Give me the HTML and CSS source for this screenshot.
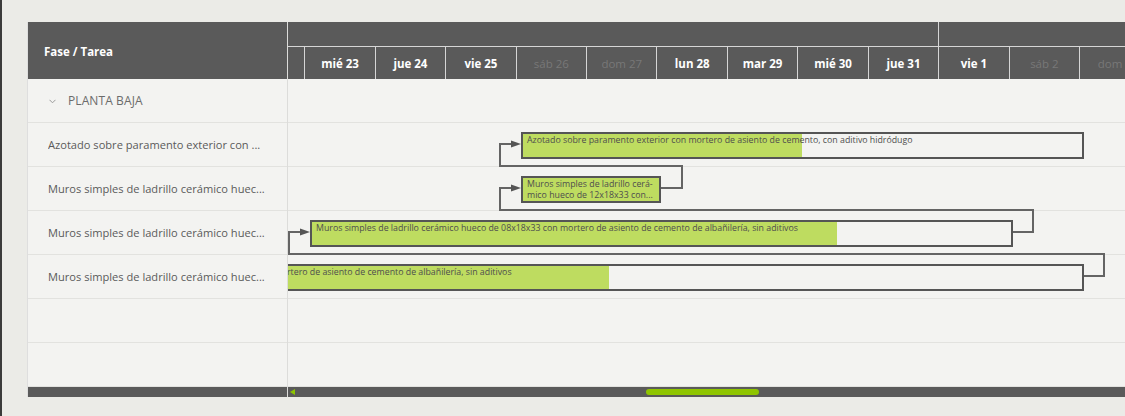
FILE: index.html
```html
<!DOCTYPE html>
<html lang="es">
<head>
<meta charset="utf-8">
<title>Gantt</title>
<link rel="stylesheet" href="styles.css">
</head>
<body>
<div class="app">
  <div class="gantt">
    <div class="left">
      <div class="lhead">Fase / Tarea</div>
      <div class="lrow group">
        <svg class="chev" width="7" height="5" viewBox="0 0 7 5"><polyline points="0.5,0.8 3.5,3.8 6.5,0.8" fill="none" stroke="#9a9a9a" stroke-width="1"/></svg>
        <span class="gname">PLANTA BAJA</span>
      </div>
      <div class="lrow task"><span class="tname">Azotado sobre paramento exterior con ...</span></div>
      <div class="lrow task"><span class="tname">Muros simples de ladrillo cerámico huec...</span></div>
      <div class="lrow task"><span class="tname">Muros simples de ladrillo cerámico huec...</span></div>
      <div class="lrow task"><span class="tname">Muros simples de ladrillo cerámico huec...</span></div>
      <div class="lrow"></div>
      <div class="lrow"></div>
      <div class="lscroll"></div>
    </div>
    <div class="right">
      <div class="thead">
        <div class="months">
          <div class="month" style="width:704.5px"></div>
          <div class="month month-next"></div>
        </div>
        <div class="days">
          <div class="day"></div>
          <div class="day">mié 23</div>
          <div class="day">jue 24</div>
          <div class="day">vie 25</div>
          <div class="day weekend">sáb 26</div>
          <div class="day weekend">dom 27</div>
          <div class="day">lun 28</div>
          <div class="day">mar 29</div>
          <div class="day">mié 30</div>
          <div class="day">jue 31</div>
          <div class="day">vie 1</div>
          <div class="day weekend">sáb 2</div>
          <div class="day weekend">dom 3</div>
        </div>
      </div>
      <div class="tbody">
        <div class="trow"></div>
        <div class="trow">
          <div class="bar" style="left:233px;width:563px">
            <div class="fill" style="width:279px"></div>
            <div class="btext">Azotado sobre paramento exterior con mortero de asiento de cemento, con aditivo hidródugo</div>
          </div>
        </div>
        <div class="trow">
          <div class="bar" style="left:233px;width:140px">
            <div class="fill" style="width:100%"></div>
            <div class="btext">Muros simples de ladrillo cerá-<br>mico hueco de 12x18x33 con...<br>mortero de asiento de cemento</div>
          </div>
        </div>
        <div class="trow">
          <div class="bar" style="left:22px;width:703px">
            <div class="fill" style="width:525px"></div>
            <div class="btext">Muros simples de ladrillo cerámico hueco de 08x18x33 con mortero de asiento de cemento de albañilería, sin aditivos</div>
          </div>
        </div>
        <div class="trow">
          <div class="bar" style="left:-2px;width:798px">
            <div class="fill" style="width:321px"></div>
            <div class="btext clipped">rtero de asiento de cemento de albañilería, sin aditivos</div>
          </div>
        </div>
        <div class="trow"></div>
        <div class="trow"></div>
        <svg class="links" width="840" height="308" viewBox="0 0 840 308">
          <g fill="none" stroke="#646464" stroke-width="2">
            <path d="M373 109 H394 V87 H212 V65 H224"/>
            <path d="M725 153 H745 V131 H212 V109 H224"/>
            <path d="M796 197 H816 V175 H1 V153 H13"/>
          </g>
          <g fill="#555555">
            <polygon points="223,61.5 233,65 223,68.5"/>
            <polygon points="223,105.5 233,109 223,112.5"/>
            <polygon points="12,149.5 22,153 12,156.5"/>
          </g>
        </svg>
      </div>
      <div class="tscroll">
        <span class="sarrow"></span>
        <span class="thumb"></span>
      </div>
    </div>
  </div>
</div>
</body>
</html>
```

FILE: styles.css
```css
html, body {
  margin: 0;
  padding: 0;
  height: 100%;
}
body {
  background: #ebebe7;
  font-family: "Open Sans", "Noto Sans", "DejaVu Sans", sans-serif;
  overflow: hidden;
}
.app {
  height: 100%;
  border-left: 2px solid #3b3b3b;
  box-sizing: border-box;
  padding: 22px 0 0 26px;
  overflow: hidden;
}
.gantt {
  display: flex;
  width: 1140px;
  background: #f3f3f1;
  border-left: 1px solid #dedede;
  margin-left: -1px;
}
.left {
  width: 259px;
  flex: none;
  border-right: 1px solid #dcdcda;
  display: flex;
  flex-direction: column;
}
.lhead {
  height: 57px;
  background: #5a5a5a;
  color: #ffffff;
  font-weight: 700;
  font-size: 11.5px;
  display: flex;
  align-items: center;
  padding-left: 16px;
  box-sizing: border-box;
  padding-top: 1px;
}
.lrow {
  height: 44px;
  box-sizing: border-box;
  border-bottom: 1px solid #e2e2df;
  display: flex;
  align-items: center;
  padding-left: 20px;
  padding-right: 8px;
}
.group {
  padding-left: 21px;
  gap: 12px;
}
.chev {
  display: block;
  margin-top: 1px;
}
.gname {
  color: #6b6b6b;
  font-size: 12px;
  letter-spacing: 0.1px;
}
.tname {
  color: #5a5a5a;
  font-size: 11.1px;
  white-space: nowrap;
  overflow: hidden;
  text-overflow: ellipsis;
}
.lscroll {
  height: 10px;
  background: #5a5a5a;
}
.right {
  flex: 1;
  min-width: 0;
  overflow: hidden;
  display: flex;
  flex-direction: column;
}
.thead {
  height: 57px;
  background: #5a5a5a;
  display: flex;
  flex-direction: column;
}
.months {
  height: 25px;
  box-sizing: border-box;
  border-bottom: 1px solid #d6d6d6;
  display: flex;
  margin-left: -54.15px;
}
.month {
  flex: none;
  height: 100%;
}
.month-next {
  flex: 1;
  border-left: 1px solid #d6d6d6;
}
.days {
  height: 32px;
  display: flex;
  margin-left: -54.15px;
}
.day {
  flex: none;
  width: 70.45px;
  box-sizing: border-box;
  border-left: 1px solid #d6d6d6;
  color: #ffffff;
  font-weight: 700;
  font-size: 11.5px;
  display: flex;
  align-items: center;
  justify-content: center;
  white-space: nowrap;
}
.day.weekend {
  color: #787878;
  font-weight: 400;
}
.tbody {
  position: relative;
  display: flex;
  flex-direction: column;
}
.trow {
  position: relative;
  height: 44px;
  box-sizing: border-box;
  border-bottom: 1px solid #e2e2df;
}
.bar {
  position: absolute;
  top: 9px;
  height: 27px;
  box-sizing: border-box;
  border: 2px solid #555555;
  overflow: hidden;
}
.fill {
  position: absolute;
  left: 0;
  top: 0;
  bottom: 0;
  background: #bedc60;
}
.btext {
  position: relative;
  padding: 1px 0 0 4px;
  font-size: 8.8px;
  line-height: 11px;
  color: #4e4e4e;
  white-space: nowrap;
}
.btext.clipped {
  padding-left: 0;
  margin-left: -1px;
}
.links {
  position: absolute;
  left: 0;
  top: 0;
  pointer-events: none;
}
.tscroll {
  height: 10px;
  background: #5a5a5a;
  display: flex;
  align-items: center;
  padding-left: 2px;
}
.sarrow {
  width: 0;
  height: 0;
  border-top: 3px solid transparent;
  border-bottom: 3px solid transparent;
  border-right: 5px solid #8cc400;
}
.thumb {
  width: 113px;
  height: 6px;
  border-radius: 3px;
  background: #8fc500;
  margin-left: 351px;
}
```
